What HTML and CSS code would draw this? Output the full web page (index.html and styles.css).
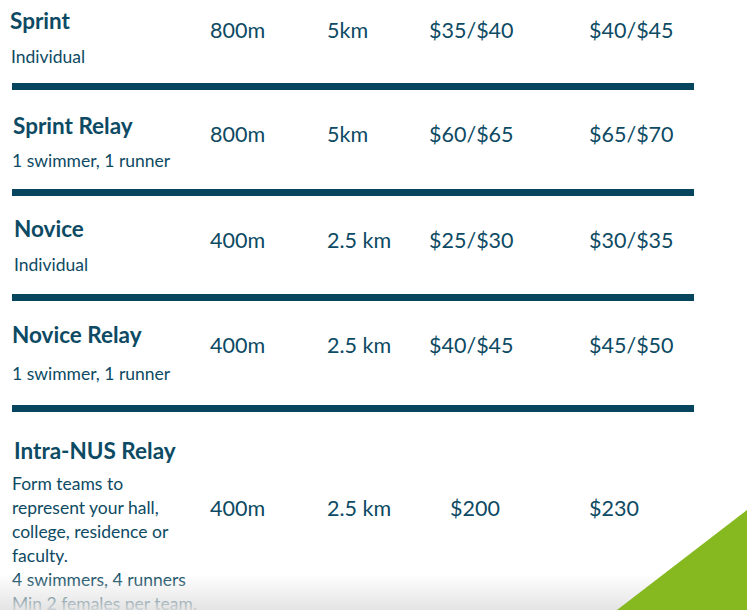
FILE: index.html
```html
<!DOCTYPE html>
<html>
<head>
<meta charset="utf-8">
<link rel="stylesheet" href="styles.css">
</head>
<body>
<div class="page">
  <div class="table">
    <div class="row row-1">
      <div class="label">
        <div class="title">Sprint</div>
        <div class="sub">Individual</div>
      </div>
      <div class="val">800m</div>
      <div class="val">5km</div>
      <div class="val">$35/$40</div>
      <div class="val">$40/$45</div>
    </div>
    <div class="bar"></div>
    <div class="row row-2">
      <div class="label">
        <div class="title">Sprint Relay</div>
        <div class="sub">1 swimmer, 1 runner</div>
      </div>
      <div class="val">800m</div>
      <div class="val">5km</div>
      <div class="val">$60/$65</div>
      <div class="val">$65/$70</div>
    </div>
    <div class="bar"></div>
    <div class="row row-3">
      <div class="label">
        <div class="title">Novice</div>
        <div class="sub">Individual</div>
      </div>
      <div class="val">400m</div>
      <div class="val">2.5 km</div>
      <div class="val">$25/$30</div>
      <div class="val">$30/$35</div>
    </div>
    <div class="bar"></div>
    <div class="row row-4">
      <div class="label">
        <div class="title">Novice Relay</div>
        <div class="sub">1 swimmer, 1 runner</div>
      </div>
      <div class="val">400m</div>
      <div class="val">2.5 km</div>
      <div class="val">$40/$45</div>
      <div class="val">$45/$50</div>
    </div>
    <div class="bar"></div>
    <div class="row row-5">
      <div class="label">
        <div class="title">Intra-NUS Relay</div>
        <div class="sub sub-long">Form teams to<br>represent your hall,<br>college, residence or<br>faculty.<br>4 swimmers, 4 runners<br>Min 2 females per team.</div>
      </div>
      <div class="val">400m</div>
      <div class="val">2.5 km</div>
      <div class="val val-indent">$200</div>
      <div class="val">$230</div>
    </div>
  </div>
  <div class="fade"></div>
  <svg class="corner" width="130" height="100" viewBox="0 0 130 100" preserveAspectRatio="none"><polygon points="0,100 130,0 130,100" fill="#86b81f"/></svg>
</div>
</body>
</html>
```
FILE: styles.css
```css
html, body {
  margin: 0;
  padding: 0;
  background: #ffffff;
}
.page {
  position: relative;
  width: 747px;
  height: 610px;
  overflow: hidden;
  font-family: Lato, "Liberation Sans", sans-serif;
  color: #0d4a63;
}
.table {
  margin-left: 12px;
  width: 682px;
}
.row {
  display: grid;
  grid-template-columns: 198px 117px 102px 160px 1fr;
  align-items: start;
}
.title {
  font-weight: 700;
  font-size: 22.5px;
  line-height: 26px;
}
.sub {
  font-size: 17.5px;
  line-height: 24px;
  margin-top: 10px;
}
.val {
  font-size: 21.5px;
  line-height: 26px;
  white-space: nowrap;
}
.bar {
  height: 7px;
  background: #07445e;
}
.row-1 { padding: 8px 0 14px; }
.row-1 .title { margin-left: -2px; }
.row-1 .sub { margin-top: 11px; margin-left: -1px; }
.row-1 .val { margin-top: 9px; }

.row-2 { padding: 23px 0 16px; }
.row-2 .title { margin-left: 1px; }
.row-2 .sub { margin-top: 10px; }
.row-2 .val { margin-top: 8px; }

.row-3 { padding: 20px 0 17px; }
.row-3 .title { margin-left: 2px; }
.row-3 .sub { margin-top: 11px; margin-left: 2px; }
.row-3 .val { margin-top: 11px; }

.row-4 { padding: 21px 0 19px; }
.row-4 .sub { margin-top: 14px; }
.row-4 .val { margin-top: 10px; }

.row-5 { padding: 26px 0 0; }
.row-5 .title { margin-left: 2px; }
.row-5 .sub { margin-top: 8px; }
.row-5 .val { margin-top: 57px; }
.sub-long {
  white-space: nowrap;
}
.val-indent { padding-left: 21px; }

.fade {
  position: absolute;
  left: 0;
  right: 0;
  bottom: 0;
  height: 36px;
  background: linear-gradient(to bottom, rgba(235,235,235,0), rgba(225,225,225,0.9));
}
.corner {
  position: absolute;
  right: 0;
  bottom: 0;
  display: block;
}
```
